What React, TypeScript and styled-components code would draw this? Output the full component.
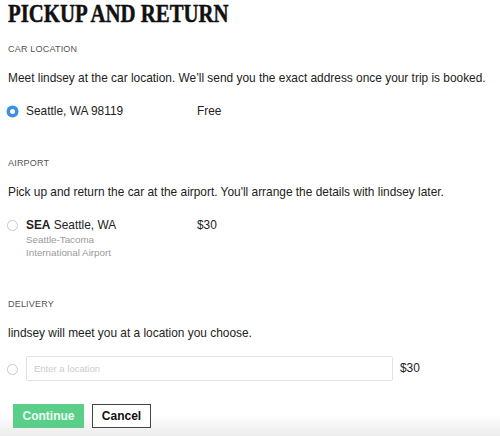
import React from "react";
import styled, { createGlobalStyle } from "styled-components";

const Global = createGlobalStyle`
  html, body { margin: 0; padding: 0; background: #fff; }
  body { font-family: "Liberation Sans", Arial, sans-serif; color: #222; }
  * { box-sizing: border-box; }
`;

const Page = styled.div`
  width: 500px;
  height: 436px;
  display: flex;
  flex-direction: column;
  overflow: hidden;
`;

const Content = styled.div`
  padding: 0 8px;
  flex: 1;
  min-height: 0;
`;

const Title = styled.h1`
  margin: 0;
  padding-top: 1px;
  font-family: "Liberation Serif", "Times New Roman", serif;
  font-weight: 700;
  font-size: 25.5px;
  line-height: 26px;
  color: #111;
  white-space: nowrap;
  transform: scaleX(0.815);
  transform-origin: left center;
  -webkit-text-stroke: 0.5px #111;
`;

const Section = styled.section<{ $top: number }>`
  margin-top: ${(p) => p.$top}px;
`;

const Label = styled.div`
  font-size: 9px;
  line-height: 12px;
  text-transform: uppercase;
  color: #555;
  letter-spacing: 0.2px;
`;

const Desc = styled.p`
  margin: 15px 0 0;
  font-size: 11.9px;
  line-height: 16px;
  color: #222;
`;

const Option = styled.div<{ $top: number }>`
  margin-top: ${(p) => p.$top}px;
  display: flex;
  align-items: flex-start;
`;

const Radio = styled.span<{ $checked?: boolean }>`
  flex: none;
  width: 11px;
  height: 11px;
  margin: 2px 8px 0 -1px;
  border-radius: 50%;
  border: ${(p) => (p.$checked ? "3px solid #3d8fe3" : "1px solid #c8c8c8")};
  background: #fff;
  box-shadow: ${(p) => (p.$checked ? "0 0 0 0.5px #3d8fe3" : "none")};
`;

const Place = styled.div`
  width: 171px;
  flex: none;
`;

const PlaceName = styled.div`
  font-size: 11.9px;
  line-height: 15px;
  color: #222;
  b { font-weight: 700; }
`;

const PlaceSub = styled.div`
  font-size: 9.8px;
  line-height: 13px;
  color: #9a9a9a;
`;

const Price = styled.div`
  font-size: 11.9px;
  line-height: 15px;
  color: #222;
`;

const InputRow = styled.div`
  margin-top: 15px;
  display: flex;
  align-items: center;
`;

const LocationInput = styled.input`
  width: 367px;
  height: 25px;
  border: 1px solid #e2e2e2;
  border-radius: 2px;
  padding: 0 7px;
  font-family: inherit;
  font-size: 9.5px;
  color: #222;
  outline: none;
  margin-right: 7px;
  &::placeholder { color: #ccc; }
`;

const Footer = styled.div`
  flex: none;
  height: 40px;
  padding: 8px 13px 0;
  display: flex;
  gap: 8px;
  align-items: flex-start;
  background: linear-gradient(to bottom, #fff 0%, #fff 45%, #ececec 100%);
`;

const Button = styled.button<{ $primary?: boolean }>`
  height: 24px;
  padding: 0;
  font-family: inherit;
  font-size: 12px;
  font-weight: 700;
  border-radius: 0;
  cursor: pointer;
  background: ${(p) => (p.$primary ? "#5bcf8a" : "#fff")};
  color: ${(p) => (p.$primary ? "#eafff2" : "#111")};
  border: ${(p) => (p.$primary ? "none" : "1px solid #444")};
  width: ${(p) => (p.$primary ? "71px" : "59px")};
`;

export default function App() {
  return (
    <Page>
      <Global />
      <Content>
        <Title>PICKUP AND RETURN</Title>
        <Section $top={16}>
          <Label>Car location</Label>
          <Desc>
            Meet lindsey at the car location. We’ll send you the exact address once your trip is booked.
          </Desc>
          <Option $top={18}>
            <Radio $checked />
            <Place>
              <PlaceName>Seattle, WA 98119</PlaceName>
            </Place>
            <Price>Free</Price>
          </Option>
        </Section>
        <Section $top={38}>
          <Label>Airport</Label>
          <Desc>
            Pick up and return the car at the airport. You'll arrange the details with lindsey later.
          </Desc>
          <Option $top={18}>
            <Radio />
            <Place>
              <PlaceName>
                <b>SEA</b> Seattle, WA
              </PlaceName>
              <PlaceSub>Seattle-Tacoma</PlaceSub>
              <PlaceSub>International Airport</PlaceSub>
            </Place>
            <Price>$30</Price>
          </Option>
        </Section>
        <Section $top={39}>
          <Label>Delivery</Label>
          <Desc>lindsey will meet you at a location you choose.</Desc>
          <InputRow>
            <Radio />
            <LocationInput placeholder="Enter a location" />
            <Price>$30</Price>
          </InputRow>
        </Section>
      </Content>
      <Footer>
        <Button $primary>Continue</Button>
        <Button>Cancel</Button>
      </Footer>
    </Page>
  );
}
